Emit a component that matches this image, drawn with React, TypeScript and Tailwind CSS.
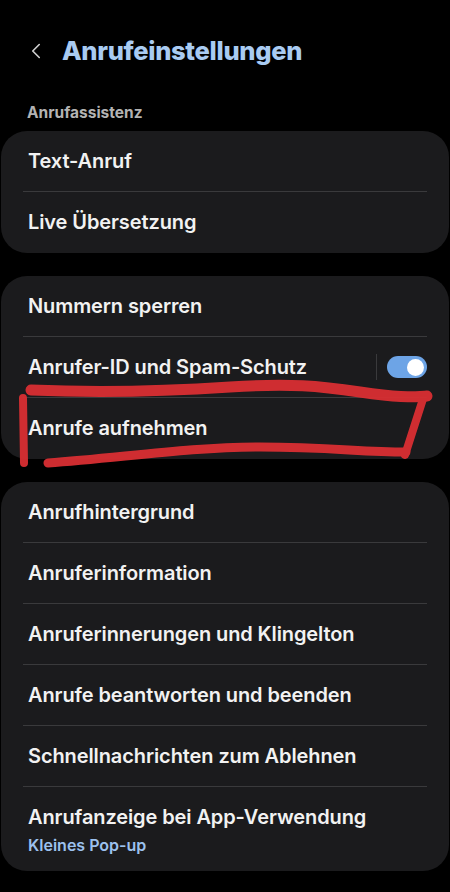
import { ChevronLeft } from "lucide-react";

const font = { fontFamily: "Inter, 'Noto Sans', sans-serif" };

function Row({ label, sub, toggle, last }: { label: string; sub?: string; toggle?: boolean; last?: boolean }) {
  return (
    <div className="px-[22px]">
      <div className={`flex items-center ${sub ? "h-[84px] pt-[3px]" : "h-[61px]"} ${last ? "" : "border-b border-[#3a3a3c]"}`}>
        <div className="flex-1 px-[5px]">
          <div className="text-[20px] font-semibold text-[#f2f2f2] leading-tight tracking-[-0.1px]">{label}</div>
          {sub && <div className="text-[16px] font-semibold text-[#9cc1ee] mt-[3px]">{sub}</div>}
        </div>
        {toggle && (
          <div className="flex items-center gap-[10px]">
            <div className="w-px h-[26px] bg-[#3a3a3c]" />
            <div className="w-[40px] h-[22px] rounded-full bg-[#6da4e6] flex items-center justify-end px-[3px]">
              <div className="w-[17px] h-[17px] rounded-full bg-white" />
            </div>
          </div>
        )}
      </div>
    </div>
  );
}

function Card({ children }: { children: React.ReactNode }) {
  return <div className="bg-[#1b1b1d] rounded-[26px] mx-[1px]">{children}</div>;
}

export default function App() {
  return (
    <div className="min-h-[892px] bg-black relative" style={font}>
      {/* Kopfzeile */}
      <div className="flex items-center pt-[16px] pl-[23px] h-[86px]">
        <ChevronLeft size={26} strokeWidth={1.5} className="text-[#d0d0d0]" />
        <div className="ml-[13px] text-[25.5px] font-extrabold text-[#a9cbf2] tracking-[-0.3px]">Anrufeinstellungen</div>
      </div>

      <div className="pl-[27px] pt-[17px] pb-[8px] text-[15.5px] leading-[20px] font-bold text-[#b3b3b3]">Anrufassistenz</div>

      <div className="flex flex-col gap-[23px]">
        <Card>
          <Row label="Text-Anruf" />
          <Row label="Live Übersetzung" last />
        </Card>
        <Card>
          <Row label="Nummern sperren" />
          <Row label="Anrufer-ID und Spam-Schutz" toggle />
          <Row label="Anrufe aufnehmen" last />
        </Card>
        <Card>
          <Row label="Anrufhintergrund" />
          <Row label="Anruferinformation" />
          <Row label="Anruferinnerungen und Klingelton" />
          <Row label="Anrufe beantworten und beenden" />
          <Row label="Schnellnachrichten zum Ablehnen" />
          <Row label="Anrufanzeige bei App-Verwendung" sub="Kleines Pop-up" last />
        </Card>
      </div>

      {/* rote Markierung */}
      <svg className="absolute left-0 top-0 pointer-events-none" width="450" height="892">
        <g fill="none" stroke="#d92f33" strokeLinecap="round" strokeLinejoin="round" opacity="0.95">
          <path d="M31 390 C 100 393, 170 391, 230 387 S 320 386, 360 392 S 410 397, 427 396" strokeWidth="11" />
          <path d="M423 399 L 405 455" strokeWidth="8" />
          <path d="M48 463 C 120 458, 190 447, 260 447 S 360 452, 406 452" strokeWidth="9" />
          <path d="M23 398 L 24 463" strokeWidth="8" />
        </g>
      </svg>
    </div>
  );
}
